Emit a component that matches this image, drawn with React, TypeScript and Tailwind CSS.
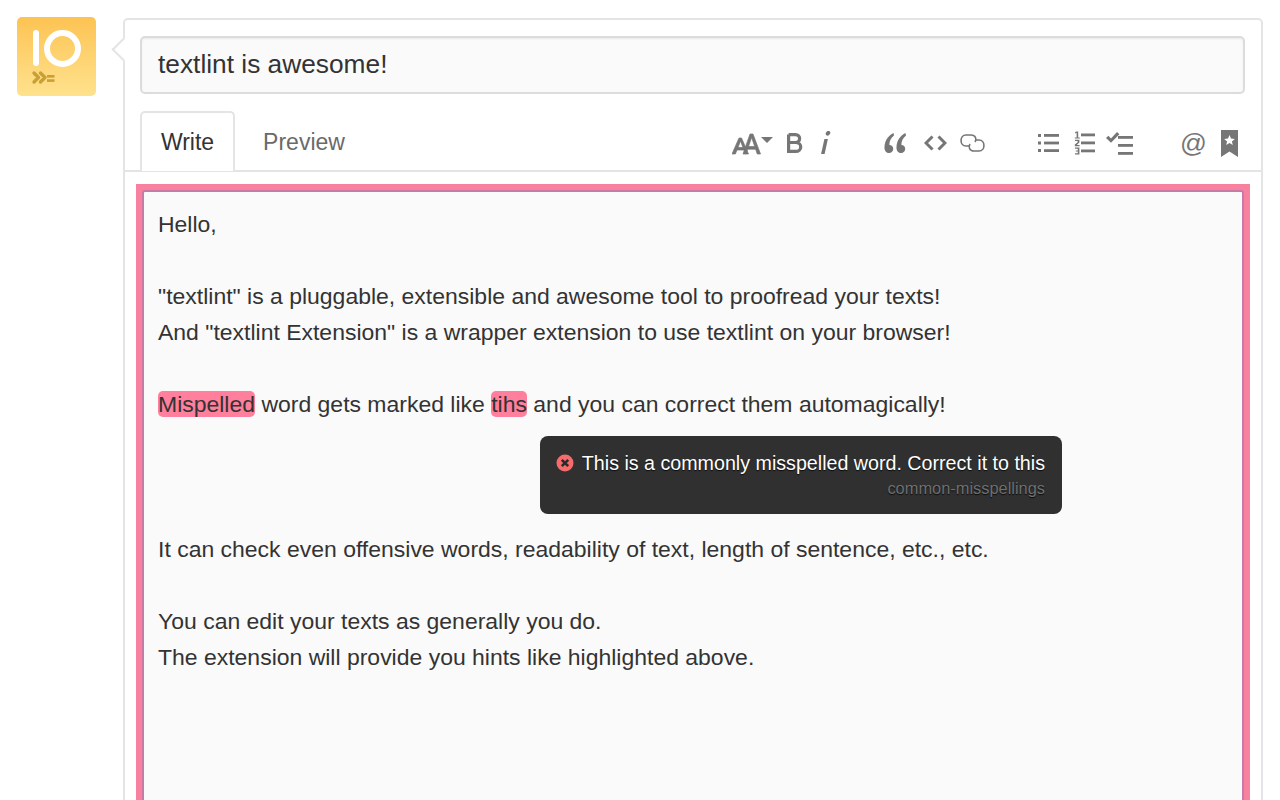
import React from "react";

const G = "#767676";

function AaIcon() {
  return (
    <svg width="42" height="24" viewBox="0 0 42 24" fill={G} stroke={G} strokeWidth="0.7">
      <path d="M0 23 L7 7 H9.5 L16.5 23 H13.6 L12 19 H5 L3.4 23 Z M6 16.5 H11 L8.5 10 Z" />
      <path d="M11 23 L18 3 H21 L28.5 23 H25.3 L23.6 18.2 H15.6 L14 23 Z M16.5 15.5 H22.7 L19.6 6.5 Z" />
      <path d="M29 6 H41 L35 12 Z" stroke="none" />
    </svg>
  );
}
function BoldIcon() {
  return (
    <svg width="16" height="20" viewBox="0 0 16 20" fill="none" stroke={G} strokeWidth="3.2">
      <path d="M1.6 1.6 H8.5 C14 1.6 14 9.5 8.5 9.5 H1.6 M8.5 9.5 C15.5 9.5 15.5 18.4 8.5 18.4 H1.6 V1.6" />
    </svg>
  );
}
function ItalicIcon() {
  return (
    <svg width="10" height="24" viewBox="0 0 10 24" fill={G}>
      <path d="M5.5 1 a2 2 0 1 1 3 2.4 a2 2 0 1 1 -3 -2.4 Z" />
      <path d="M3.4 8 H6.9 L3.6 23 H0.1 Z" />
    </svg>
  );
}
function QuoteIcon() {
  return (
    <svg width="22" height="22" viewBox="0 0 22 22" fill={G}>
      <path d="M9.5 1 C4.5 3.5 1 8 0.5 14.5 C0.2 18.5 2 21 5 21 C7.5 21 9.2 19.2 9.2 17 C9.2 14.6 7.5 13 5.4 13 C5.2 9 7 6 10 3.4 Z" />
      <path d="M21.5 1 C16.5 3.5 13 8 12.5 14.5 C12.2 18.5 14 21 17 21 C19.5 21 21.2 19.2 21.2 17 C21.2 14.6 19.5 13 17.4 13 C17.2 9 19 6 22 3.4 Z" />
    </svg>
  );
}
function CodeIcon() {
  return (
    <svg width="23" height="16" viewBox="0 0 23 16" fill="none" stroke={G} strokeWidth="3">
      <path d="M8.5 1.5 L2 8 L8.5 14.5 M14.5 1.5 L21 8 L14.5 14.5" />
    </svg>
  );
}
function LinkIcon() {
  return (
    <svg width="25" height="18" viewBox="0 0 25 18" fill="none" stroke={G} strokeWidth="1.6">
      <path d="M9 12 H6 C-0.6 12 -0.6 1 6 1 H11 C15.5 1 17 5 15 8" />
      <path d="M16 6 H19 C25.6 6 25.6 17 19 17 H14 C9.5 17 8 13 10 10" />
    </svg>
  );
}
function ListIcon() {
  return (
    <svg width="21" height="20" viewBox="0 0 21 20" fill={G}>
      <rect x="0" y="1" width="3" height="3" /><rect x="6" y="1" width="15" height="2.8" />
      <rect x="0" y="8.5" width="3" height="3" /><rect x="6" y="8.6" width="15" height="2.8" />
      <rect x="0" y="16" width="3" height="3" /><rect x="6" y="16.2" width="15" height="2.8" />
    </svg>
  );
}
function OrderedIcon() {
  return (
    <svg width="21" height="24" viewBox="0 0 21 24" fill={G}>
      <path d="M2 0.5 H4.2 V6.5 H5.8 V7.6 H0.8 V6.5 H2.6 V1.8 L1 2.4 V1.4 Z" />
      <path d="M1 8.8 H5.4 V11.6 L2.8 13.9 H5.6 V15.2 H0.8 V13.6 L3.6 11.2 V10 H1 Z" />
      <path d="M1 16.5 H5.4 V23.5 H1 V22.2 H3.8 V20.6 H1.8 V19.4 H3.8 V17.8 H1 Z" />
      <rect x="7" y="2.5" width="14" height="2.8" /><rect x="7" y="10.5" width="14" height="2.8" /><rect x="7" y="18.5" width="14" height="2.8" />
    </svg>
  );
}
function TaskIcon() {
  return (
    <svg width="27" height="23" viewBox="0 0 27 23" fill={G}>
      <path d="M0 6 L2.4 3.8 L5 6.4 L11 0 L13.4 2.2 L5 10.8 Z" />
      <rect x="12" y="4" width="15" height="2.8" /><rect x="12" y="12" width="15" height="2.8" /><rect x="12" y="20" width="15" height="2.8" />
    </svg>
  );
}
function BookmarkIcon() {
  return (
    <svg width="17" height="27" viewBox="0 0 17 27" fill={G}>
      <path d="M0 0 H17 V27 L8.5 21.5 L0 27 Z" />
      <path fill="#fff" d="M8.5 5 L10 8.6 L13.8 8.9 L10.9 11.4 L11.8 15.1 L8.5 13.1 L5.2 15.1 L6.1 11.4 L3.2 8.9 L7 8.6 Z" />
    </svg>
  );
}
function LogoIcon() {
  return (
    <svg width="79" height="79" viewBox="0 0 79 79">
      <rect x="16" y="13" width="6" height="36" rx="3" fill="#fff" />
      <circle cx="45.5" cy="31.5" r="15.5" fill="none" stroke="#fff" strokeWidth="6" />
      <path d="M17 56 L21.5 60.5 L17 65 M23.5 56 L28 60.5 L23.5 65" fill="none" stroke="#c9a035" strokeWidth="3.4" strokeLinecap="round" strokeLinejoin="round" />
      <rect x="30" y="58" width="7.5" height="2.6" fill="#c9a035" />
      <rect x="30" y="62.3" width="7.5" height="2.6" fill="#c9a035" />
    </svg>
  );
}

export default function App() {
  return (
    <div className="w-[1280px] h-[800px] overflow-hidden bg-white flex items-start pt-[17px] pl-[17px] text-[#333] font-['Liberation_Sans',Arial,sans-serif]">
      <div className="w-[79px] h-[79px] rounded-[5px] bg-gradient-to-b from-[#fdc352] to-[#fee28c] shrink-0">
        <LogoIcon />
      </div>

      <div className="relative ml-[27px] mt-px w-[1140px] h-[900px] shrink-0 border-2 border-[#e4e4e4] rounded-[5px] bg-white">
        <div className="absolute left-[-10px] top-[21px] w-[17px] h-[17px] rotate-45 bg-white border-l-2 border-b-2 border-[#e4e4e4]" />

        <div className="relative ml-[15px] mr-4 mt-4 h-[58px] border-2 border-[#dcdcdc] rounded-[5px] bg-[#fafafa] flex items-center px-4 pb-[2px] text-[26.3px] leading-none shadow-[inset_0_1px_2px_rgba(0,0,0,0.07)]">
          textlint is awesome!
        </div>

        <div className="relative mt-[17px] h-[61px] border-b-2 border-[#e4e4e4] flex items-start pl-[15px]">
          <div className="w-[95px] h-[60px] border-2 border-b-0 border-[#e4e4e4] rounded-t-[5px] bg-white flex items-center justify-center text-[23px]">
            Write
          </div>
          <div className="w-[138px] h-[60px] flex items-center justify-center pt-[2px] text-[23px] text-[#6a6a6a]">
            Preview
          </div>
          <div className="flex-1 h-[60px] relative">
            <div className="absolute right-[23px] top-[16px] h-[32px] flex items-center">
              <AaIcon />
              <span className="w-[13px]" />
              <BoldIcon />
              <span className="w-[18px]" />
              <ItalicIcon />
              <span className="w-[53px]" />
              <QuoteIcon />
              <span className="w-[18px]" />
              <CodeIcon />
              <span className="w-[13px]" />
              <LinkIcon />
              <span className="w-[53px]" />
              <ListIcon />
              <span className="w-[15px]" />
              <OrderedIcon />
              <span className="w-[11px]" />
              <TaskIcon />
              <span className="w-[47px]" />
              <span className="text-[26.5px] leading-none text-[#767676] w-[26px] text-center">@</span>
              <span className="w-[15px]" />
              <BookmarkIcon />
            </div>
          </div>
        </div>

        <div className="ml-[11px] mt-3 w-[1114px] h-[700px] bg-[#f7819f] p-[6px]">
          <div className="relative h-full border-2 border-[#c77aa6] rounded-[3px] bg-[#fafafa] pl-[14px] pt-[14px] text-[22.97px] leading-[36px] text-[#333]">
            <p>Hello,</p>
            <p className="h-[36px]" />
            <p>"textlint" is a pluggable, extensible and awesome tool to proofread your texts!</p>
            <p>And "textlint Extension" is a wrapper extension to use textlint on your browser!</p>
            <p className="h-[36px]" />
            <p>
              <span className="bg-[#ff7f9c] rounded-[5px]">Mispelled</span> word gets marked like{" "}
              <span className="bg-[#ff7f9c] rounded-[5px]">tihs</span> and you can correct them automagically!
            </p>
            <p className="h-[36px]" />
            <p className="h-[36px]" />
            <p className="h-[37px]" />
            <p>It can check even offensive words, readability of text, length of sentence, etc., etc.</p>
            <p className="h-[36px]" />
            <p>You can edit your texts as generally you do.</p>
            <p>The extension will provide you hints like highlighted above.</p>

            <div className="absolute left-[396px] top-[244px] w-[522px] h-[78px] rounded-[8px] bg-[#303030] pl-[16px] pr-[17px] pt-[14px] text-right">
              <div className="flex items-center justify-end gap-[8px] h-[26px] text-[19.66px] leading-[26px] text-white whitespace-nowrap [text-shadow:0_1px_1px_rgba(0,0,0,0.8)]">
                <svg width="18" height="18" viewBox="0 0 18 18" className="shrink-0">
                  <circle cx="9" cy="9" r="8.5" fill="#f66b6b" />
                  <path d="M5.8 5.8 L12.2 12.2 M12.2 5.8 L5.8 12.2" stroke="#2b2b2b" strokeWidth="2.6" />
                </svg>
                <span>This is a commonly misspelled word. Correct it to this</span>
              </div>
              <div className="text-[16.4px] leading-[24px] text-[#6f6f6f] [text-shadow:0_1px_1px_rgba(0,0,0,0.8)]">common-misspellings</div>
            </div>
          </div>
        </div>
      </div>
    </div>
  );
}
